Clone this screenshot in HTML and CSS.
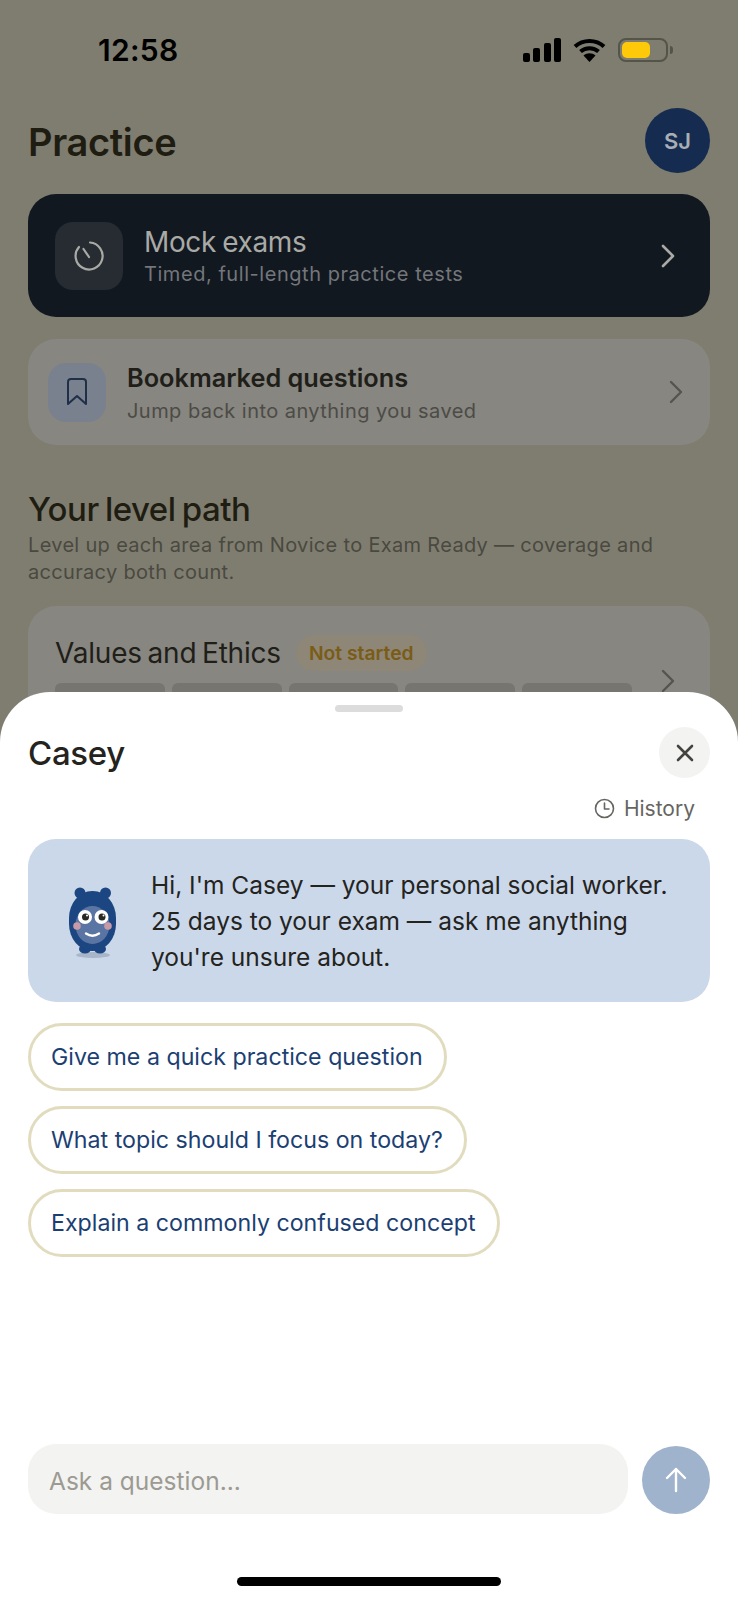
FILE: index.html
```html
<!DOCTYPE html>
<html>

<head>
  <meta name="viewport" content="width=device-width, initial-scale=1.0">
  <title>Practice</title>
  <link rel="stylesheet" href="styles.css">
</head>

<body>
  <div id="page">
    <div class="statusBar">
      <span class="time">12:58</span>
      <div class="statusIcons">
        <svg width="38" height="24" viewBox="0 0 38 24" fill="#000">
          <rect x="0" y="15" width="7" height="9" rx="2"/>
          <rect x="10" y="10" width="7" height="14" rx="2"/>
          <rect x="21" y="5" width="7" height="19" rx="2"/>
          <rect x="31" y="0" width="7" height="24" rx="2"/>
        </svg>
        <svg width="33" height="24" viewBox="0 0 33 24" fill="none" stroke="#000" stroke-width="4">
          <path d="M2 8.500C10 1 23 1 31 8.500"/>
          <path d="M7.500 13.500C12.500 9 20.500 9 25.500 13.500"/>
          <path d="M16.500 24L10.500 17.500C14 14.500 19 14.500 22.500 17.500Z" fill="#000" stroke="none"/>
        </svg>
        <div class="battery"><div class="batteryFill"></div></div>
        <div class="batteryCap"></div>
      </div>
    </div>

    <header class="pageHeader">
      <h1>Practice</h1>
      <div class="avatar">SJ</div>
    </header>

    <div class="mockCard">
      <div class="mockIcon">
        <svg width="32" height="32" viewBox="0 0 32 32" fill="none" stroke="#a9aaa6" stroke-width="2.200" stroke-linecap="round">
          <path d="M17 2.500A13.500 13.500 0 1 1 6 7"/>
          <path d="M10.500 9L16 17"/>
        </svg>
      </div>
      <div class="cardText">
        <div class="mockTitle">Mock exams</div>
        <div class="mockSub">Timed, full-length practice tests</div>
      </div>
      <svg class="chevron" width="14" height="24" viewBox="0 0 14 24" fill="none" stroke="#a9aaa6" stroke-width="2.600" stroke-linecap="round" stroke-linejoin="round">
        <path d="M2 2l10 10L2 22"/>
      </svg>
    </div>

    <div class="bookmarkCard">
      <div class="bookmarkIcon">
        <svg width="22" height="28" viewBox="0 0 22 28" fill="none" stroke="#1e2f47" stroke-width="2" stroke-linejoin="round">
          <path d="M2 4a3 3 0 0 1 3-3h12a3 3 0 0 1 3 3v22l-9-8-9 8z"/>
        </svg>
      </div>
      <div class="cardText">
        <div class="bookmarkTitle">Bookmarked questions</div>
        <div class="bookmarkSub">Jump back into anything you saved</div>
      </div>
      <svg class="chevron" width="14" height="24" viewBox="0 0 14 24" fill="none" stroke="#55544f" stroke-width="2.400" stroke-linecap="round" stroke-linejoin="round">
        <path d="M2 2l10 10L2 22"/>
      </svg>
    </div>

    <section class="levelPath">
      <h2>Your level path</h2>
      <p>Level up each area from Novice to Exam Ready — coverage and accuracy both count.</p>
    </section>

    <div class="levelCard">
      <div class="levelBody">
        <div class="levelHead">
          <span class="levelName">Values and Ethics</span>
          <span class="levelBadge">Not started</span>
        </div>
        <div class="levelBars">
          <span></span><span></span><span></span><span></span><span></span>
        </div>
      </div>
      <svg class="chevron" width="14" height="24" viewBox="0 0 14 24" fill="none" stroke="#55544f" stroke-width="2.400" stroke-linecap="round" stroke-linejoin="round">
        <path d="M2 2l10 10L2 22"/>
      </svg>
    </div>

    <div class="sheet">
      <div class="handle"></div>
      <div class="sheetHead">
        <h3>Casey</h3>
        <button class="closeBtn" type="button">
          <svg width="18" height="18" viewBox="0 0 18 18" fill="none" stroke="#44433f" stroke-width="2.600" stroke-linecap="round">
            <path d="M2 2l14 14M16 2L2 16"/>
          </svg>
        </button>
      </div>
      <div class="historyRow">
        <svg width="21" height="21" viewBox="0 0 21 21" fill="none" stroke="#66655f" stroke-width="1.600" stroke-linecap="round" stroke-linejoin="round">
          <circle cx="10.500" cy="10.500" r="9"/>
          <path d="M10.500 5v6h4.500"/>
        </svg>
        <span>History</span>
      </div>

      <div class="greeting">
        <svg class="mascot" width="65" height="80" viewBox="60 880 65 80">
          <ellipse cx="93" cy="954" rx="17" ry="3" fill="#a9b5c9"/>
          <circle cx="80" cy="892" r="5.500" fill="#1c4681"/>
          <circle cx="105.500" cy="892" r="5.500" fill="#1c4681"/>
          <ellipse cx="85" cy="948" rx="6" ry="4.500" fill="#1c4681"/>
          <ellipse cx="100" cy="948" rx="6" ry="4.500" fill="#1c4681"/>
          <rect x="69" y="890" width="47" height="60" rx="23" ry="27" fill="#1c4681"/>
          <ellipse cx="92.500" cy="924" rx="17" ry="19" fill="#5a75a3"/>
          <circle cx="77" cy="925" r="3.800" fill="#c69aa8"/>
          <circle cx="108" cy="925" r="3.800" fill="#c69aa8"/>
          <circle cx="85" cy="916" r="7" fill="#fff"/>
          <circle cx="101.500" cy="916" r="7" fill="#fff"/>
          <circle cx="85.500" cy="916" r="3.500" fill="#2a2a22"/>
          <circle cx="102" cy="916" r="3.500" fill="#2a2a22"/>
          <circle cx="87" cy="914.500" r="1" fill="#fff"/>
          <circle cx="103.500" cy="914.500" r="1" fill="#fff"/>
          <path d="M86 932.500Q92.500 937 99 932.500" fill="none" stroke="#fff" stroke-width="2.400" stroke-linecap="round"/>
        </svg>
        <p>Hi, I'm Casey — your personal social worker. 25 days to your exam — ask me anything you're unsure about.</p>
      </div>

      <div class="chips">
        <button class="chip" type="button">Give me a quick practice question</button>
        <button class="chip" type="button">What topic should I focus on today?</button>
        <button class="chip" type="button">Explain a commonly confused concept</button>
      </div>

      <div class="composer">
        <div class="askInput">Ask a question...</div>
        <button class="sendBtn" type="button">
          <svg width="24" height="28" viewBox="0 0 24 28" fill="none" stroke="#fff" stroke-width="2.400" stroke-linecap="round" stroke-linejoin="round">
            <path d="M12 25V3M3 12l9-9 9 9"/>
          </svg>
        </button>
      </div>
      <div class="homeBar"></div>
    </div>
  </div>
</body>

</html>
```

FILE: styles.css
```css
html,
body {
  margin: 0;
  padding: 0;
  height: 1600px;
  overflow: hidden;
  font-family: "Inter", "Liberation Sans", sans-serif;
}

#page {
  position: relative;
  height: 1600px;
  padding: 0 28px;
  box-sizing: border-box;
  background-color: #7f7d70;
  overflow: hidden;
}

h1,
h2,
h3,
p {
  margin: 0;
}

button {
  border: none;
  padding: 0;
  font-family: inherit;
  cursor: pointer;
}

.statusBar {
  display: flex;
  justify-content: space-between;
  align-items: center;
  height: 100px;
  padding: 0 0 0 70px;
}

.time {
  font-size: 30px;
  font-weight: 600;
  color: #000;
  letter-spacing: 0.3px;
}

.statusIcons {
  display: flex;
  align-items: center;
  margin-right: 37px;
}

.statusIcons svg {
  margin-right: 12px;
}

.battery {
  width: 50px;
  height: 24px;
  border: 2px solid #555449;
  border-radius: 8px;
  box-sizing: border-box;
  padding: 2px;
}

.batteryFill {
  width: 28px;
  height: 16px;
  border-radius: 5px;
  background-color: #fdc908;
}

.batteryCap {
  width: 3px;
  height: 8px;
  margin-left: 2px;
  border-radius: 0 3px 3px 0;
  background-color: #555449;
}

.pageHeader {
  display: flex;
  justify-content: space-between;
  align-items: center;
  height: 65px;
  margin-top: 8px;
  margin-bottom: 21px;
}

.pageHeader h1 {
  margin-top: 3px;
  font-size: 38px;
  font-weight: 600;
  color: #1f1d12;
  letter-spacing: -0.35px;
}

.avatar {
  display: flex;
  align-items: center;
  justify-content: center;
  width: 65px;
  height: 65px;
  border-radius: 50%;
  background-color: #152c50;
  color: #a9aeb6;
  font-size: 22px;
  font-weight: 600;
}

.mockCard {
  display: flex;
  align-items: center;
  height: 123px;
  padding: 0 35px 0 27px;
  border-radius: 28px;
  background-color: #111820;
}

.mockIcon {
  display: flex;
  align-items: center;
  justify-content: center;
  width: 68px;
  height: 68px;
  margin-right: 21px;
  border-radius: 18px;
  background-color: #262c31;
}

.cardText {
  flex: 1;
}

.mockTitle {
  font-size: 28px;
  color: #a9aaa6;
  letter-spacing: -0.4px;
  word-spacing: -1px;
  margin-bottom: 3px;
}

.mockSub {
  font-size: 20px;
  color: #74767a;
  letter-spacing: 0.55px;
}

.bookmarkCard {
  display: flex;
  align-items: center;
  height: 106px;
  margin-top: 22px;
  padding: 0 27px 0 20px;
  border-radius: 28px;
  background-color: #878680;
}

.bookmarkIcon {
  display: flex;
  align-items: center;
  justify-content: center;
  width: 58px;
  height: 59px;
  margin-right: 21px;
  border-radius: 18px;
  background-color: #7a818e;
}

.bookmarkTitle {
  font-size: 25.300px;
  font-weight: 600;
  color: #1f1e19;
  margin-bottom: 6px;
}

.bookmarkSub {
  font-size: 20px;
  color: #4c4b46;
  letter-spacing: 0.45px;
}

.levelPath {
  margin-top: 44px;
}

.levelPath h2 {
  font-size: 33px;
  font-weight: 500;
  color: #1f1d12;
  letter-spacing: -0.5px;
  word-spacing: -2px;
  margin-bottom: 3px;
}

.levelPath p {
  font-size: 20px;
  line-height: 27px;
  color: #4a4940;
  letter-spacing: 0.32px;
}

.levelCard {
  display: flex;
  align-items: center;
  height: 150px;
  margin-top: 20px;
  padding: 0 35px 0 27px;
  border-radius: 28px;
  background-color: #878680;
}

.levelBody {
  flex: 1;
  align-self: flex-start;
  padding-top: 29px;
}

.levelHead {
  display: flex;
  align-items: center;
  gap: 15px;
}

.levelName {
  font-size: 28px;
  color: #1f1e19;
  letter-spacing: -0.2px;
  word-spacing: -2px;
}

.levelBadge {
  padding: 6px 13px;
  border-radius: 18px;
  background-color: #8e8676;
  color: #7a5c16;
  font-size: 19.300px;
  font-weight: 600;
}

.levelBars {
  display: flex;
  gap: 7px;
  width: 577px;
  margin-top: 12px;
}

.levelBars span {
  flex: 1;
  height: 16px;
  border-radius: 6px;
  background-color: #767570;
}

.sheet {
  position: absolute;
  left: 0;
  right: 0;
  top: 692px;
  bottom: 0;
  padding: 13px 28px 0;
  border-radius: 50px 50px 0 0;
  background-color: #fff;
}

.handle {
  width: 68px;
  height: 7px;
  margin: 0 auto;
  border-radius: 4px;
  background-color: #dcdcdc;
}

.sheetHead {
  display: flex;
  justify-content: space-between;
  align-items: center;
  height: 51px;
  margin-top: 15px;
}

.sheetHead h3 {
  font-size: 33px;
  font-weight: 500;
  color: #24231e;
  letter-spacing: -0.3px;
}

.closeBtn {
  display: flex;
  align-items: center;
  justify-content: center;
  width: 51px;
  height: 51px;
  border-radius: 50%;
  background-color: #f3f3f1;
}

.historyRow {
  display: flex;
  justify-content: flex-end;
  align-items: center;
  gap: 9px;
  height: 28px;
  margin-top: 16px;
  padding-right: 15px;
  color: #66655f;
  font-size: 21px;
}

.greeting {
  display: flex;
  align-items: center;
  height: 163px;
  margin-top: 17px;
  padding: 0 24px 0 32px;
  box-sizing: border-box;
  border-radius: 28px;
  background-color: #cbd8e9;
}

.mascot {
  flex-shrink: 0;
  margin-right: 26px;
}

.greeting p {
  font-size: 24.500px;
  line-height: 36px;
  color: #24231e;
}

.chips {
  display: flex;
  flex-direction: column;
  align-items: flex-start;
  gap: 15px;
  margin-top: 21px;
}

.chip {
  height: 68px;
  padding: 0 21px 0 20px;
  border: 3px solid #e2dcbf;
  border-radius: 34px;
  background-color: #fff;
  color: #1c3f73;
  font-size: 23.200px;
}

.composer {
  position: absolute;
  left: 28px;
  right: 28px;
  top: 752px;
  display: flex;
  align-items: flex-end;
  gap: 14px;
}

.askInput {
  flex: 1;
  height: 70px;
  line-height: 74px;
  padding-left: 21px;
  border-radius: 28px;
  background-color: #f3f3f1;
  color: #9c9a92;
  font-size: 24.500px;
}

.sendBtn {
  display: flex;
  align-items: center;
  justify-content: center;
  width: 68px;
  height: 68px;
  border-radius: 50%;
  background-color: #9fb3cc;
}

.homeBar {
  position: absolute;
  left: 237px;
  bottom: 14px;
  width: 264px;
  height: 9px;
  border-radius: 5px;
  background-color: #000;
}
```
